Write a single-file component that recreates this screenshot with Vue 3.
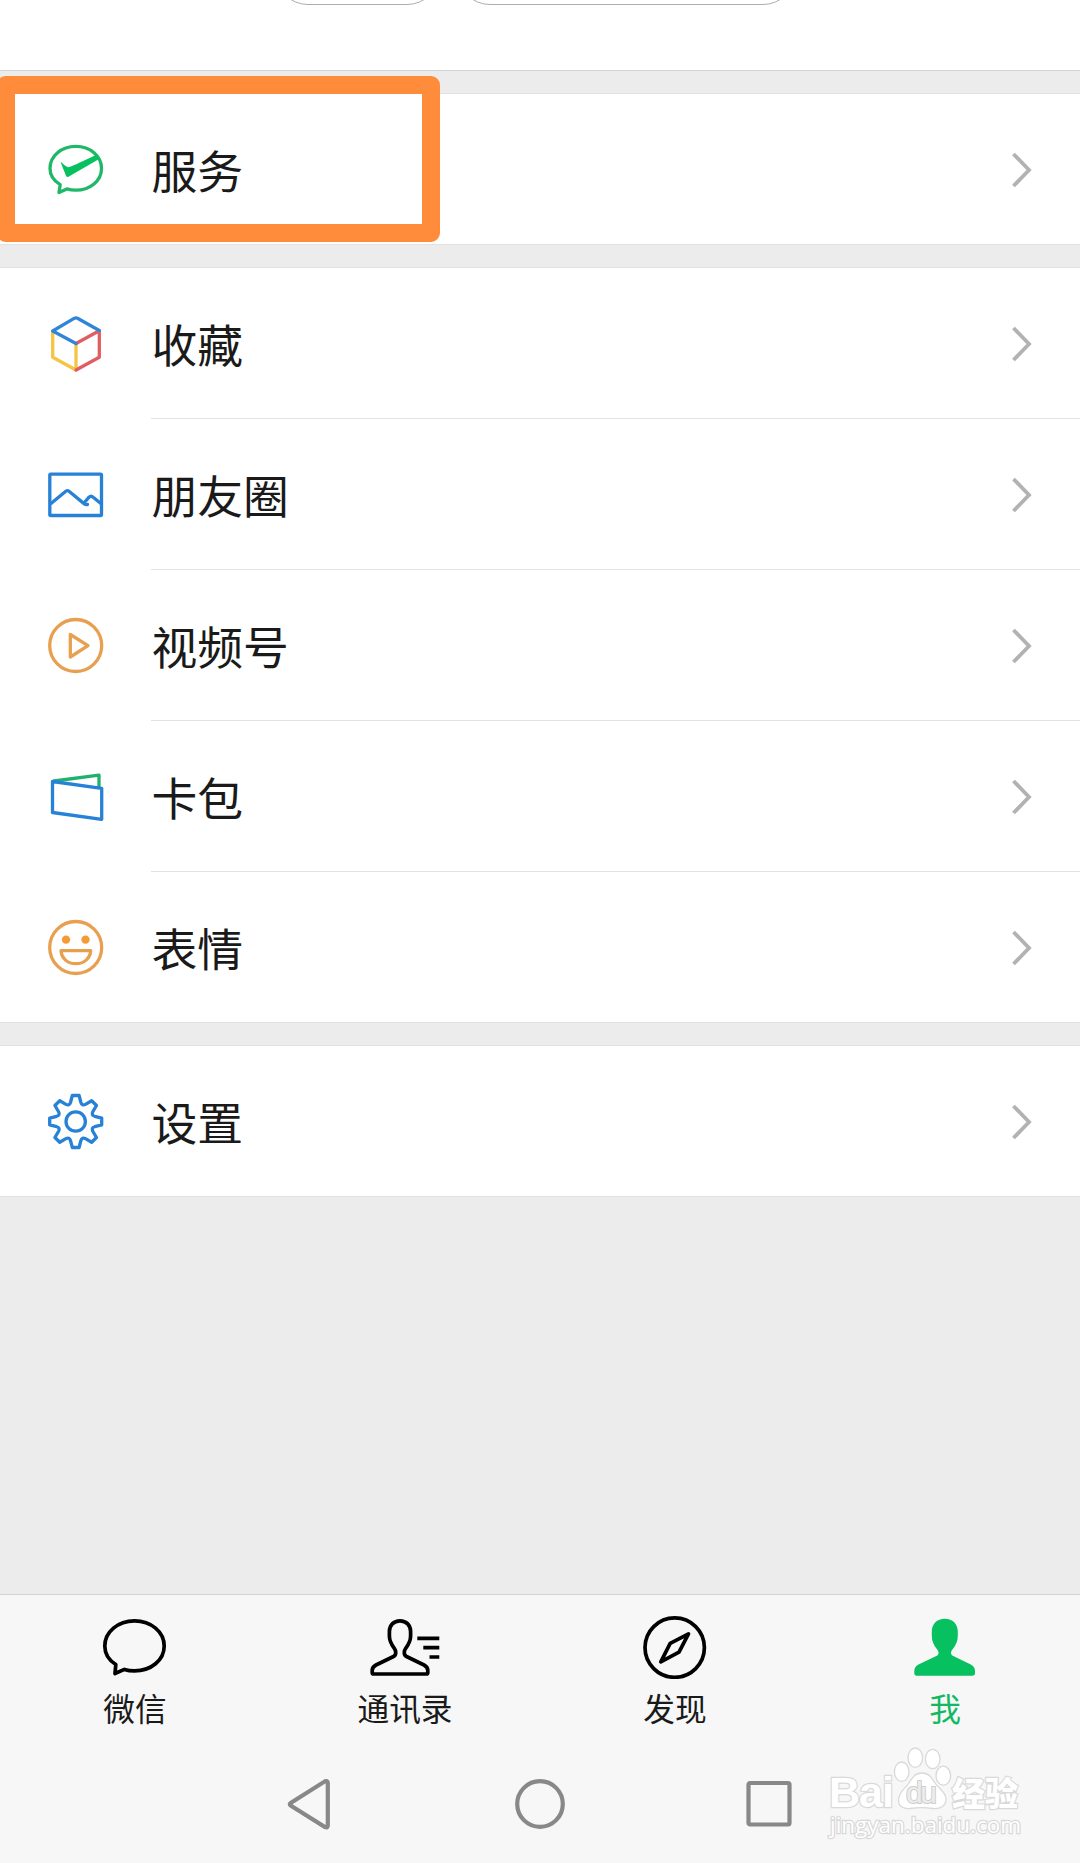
<template>
  <div class="page">
    <!-- 個人資訊底部 -->
    <header class="profile">
      <span class="pill pill-status"></span>
      <span class="pill pill-friends"></span>
    </header>

    <!-- 選單 -->
    <main class="menu">
      <ul v-for="(group, index) in menuGroups" :key="index" class="menu-group">
        <li v-for="item in group" :key="item.key" class="menu-item">
          <svg class="menu-icon" viewBox="0 0 66 66">
            <g v-if="item.key === 'service'" stroke="#1fb768">
              <path d="M17.2 48.6C10.500 44.500 7 38.800 7 32.400C7 20 18.500 10.400 32.800 10.400S58.500 20 58.500 32.400S47 54.200 32.800 54.200C29.600 54.200 26.700 53.800 23.800 52.900L16 56.600Z" />
              <path class="solid" fill="#07c160" d="M17.700 26.500L18.500 26.300Q22.500 31 25.500 31.300Q27 31.300 53.500 18.800L57 22.400L25 40.900Q23.800 41.300 23 39.800Z" />
            </g>
            <g v-else-if="item.key === 'favorite'">
              <path stroke="#f5c443" d="M9.700 21.200V47.200L33 60V33.500" />
              <path stroke="#e05d62" d="M56.300 21V47.200L33 60M33 33.500L56.300 20.800" />
              <path stroke="#2f86d8" d="M33 33.500L9.700 21L31.500 8.200Q33 7.400 34.500 8.200L56.300 20.500" />
            </g>
            <g v-else-if="item.key === 'moments'" stroke="#2782d7">
              <rect x="6.800" y="13.200" width="51.700" height="41.300" rx="1" />
              <path d="M8 42.500L22.800 30.300Q24.400 29 26 30.300L41 42.600Q42.500 43.800 44.500 43.500M41 42L46 36.200Q48 34.200 50.200 36.200L57.500 42.300" />
            </g>
            <g v-else-if="item.key === 'channels'" stroke="#e8a050">
              <circle cx="32.700" cy="33.500" r="26" />
              <path d="M27.300 22.500V45L45 33.700Z" />
            </g>
            <g v-else-if="item.key === 'cards'">
              <path stroke="#20b26c" d="M11 18L56 12.200V24" />
              <path stroke="#2782d7" d="M9.500 18.500L58.700 25.300V56.300L9.500 49.500Z" />
            </g>
            <g v-else-if="item.key === 'sticker'" stroke="#e8a050">
              <circle cx="32.700" cy="33.500" r="26" />
              <circle class="solid" fill="#f59a35" cx="23" cy="25.600" r="4.200" />
              <circle class="solid" fill="#f59a35" cx="42.500" cy="25.600" r="4.200" />
              <path d="M18 36.700H47.700C47.200 44.500 41 49.700 32.800 49.700S18.500 44.500 18 36.700Z" />
            </g>
            <g v-else stroke="#2782d7">
              <path :d="gearPath" />
              <circle cx="32.700" cy="33.500" r="9.700" />
            </g>
          </svg>
          <div class="menu-body">
            <span class="menu-label">{{ item.label }}</span>
            <svg class="arrow" viewBox="0 0 24 40">
              <path d="M4.500 4L20 20L4.500 36" />
            </svg>
          </div>
          <span v-if="item.marked" class="mark"></span>
        </li>
      </ul>
    </main>

    <!-- 底部導覽列 -->
    <nav class="tabbar">
      <a
        v-for="tab in tabs"
        :key="tab.key"
        class="tab"
        :class="{ active: tab.key === currentTab }"
        @click="currentTab = tab.key"
      >
        <svg class="tab-icon" viewBox="0 0 80 66">
          <path v-if="tab.key === 'chats'" d="M20.800 51.500C13.500 47 9.800 40.500 9.800 33C9.800 18.800 23 7.800 39.500 7.800S69.200 18.800 69.200 33S56 57.900 39.500 57.900C35.900 57.900 32.500 57.400 29.400 56.400L20 60.500Z" />
          <g v-else-if="tab.key === 'contacts'">
            <path d="M35 7.800C28.500 7.800 24.400 12.500 24.400 18.500V23C24.400 28 26.500 31.500 29 34.800C31.500 38 31.300 42 28.500 43.500L11 52Q7.200 54 7.200 57.500V59.500Q7.200 61 8.700 61H61.300Q62.800 61 62.800 59.500V57.500Q62.800 54 59 52L41.500 43.500C38.700 42 38.500 38 41 34.800C43.500 31.500 45.600 28 45.600 23V18.500C45.600 12.500 41.500 7.800 35 7.800Z" />
            <path d="M52.300 25.300H74.300M58.300 34.700H74.300M64.500 44H74.300" />
          </g>
          <g v-else-if="tab.key === 'discover'">
            <circle cx="39.700" cy="34.600" r="29.700" />
            <path d="M53.500 20.800L35.200 30.400L25.800 48.800L44 39.200Z" />
          </g>
          <path v-else class="filled" d="M39.800 5.700C32 5.700 26.800 11 26.800 18.500V23C26.800 28 28.800 32.500 32 36.300C34 38.700 34.300 41.500 31.800 42.800L13.500 51.500Q9.300 53.800 9.300 58V60Q9.300 62.700 12 62.700H67.300Q70 62.700 70 60V58Q70 53.800 65.800 51.500L47.800 42.800C45.300 41.500 45.600 38.700 47.600 36.300C50.800 32.500 52.800 28 52.800 23V18.500C52.800 11 47.600 5.700 39.800 5.700Z" />
        </svg>
        <span class="tab-label">{{ tab.label }}</span>
      </a>
    </nav>

    <!-- 系統按鍵 -->
    <footer class="system-nav">
      <svg viewBox="0 0 60 60">
        <path d="M47.800 8.500Q47.500 6.300 45 7.300L11 28.700Q8.500 30.200 11 31.800L45 53Q47.500 54 47.800 51.800Z" />
      </svg>
      <svg viewBox="0 0 60 60"><circle cx="30" cy="30" r="22.800" /></svg>
      <svg viewBox="0 0 60 60"><rect x="8.500" y="9" width="41" height="41.500" rx="1.500" /></svg>
    </footer>

    <!-- 浮水印 -->
    <svg class="watermark" viewBox="0 0 210 100">
      <text class="brand" x="9" y="57" textLength="65">Bai</text>
      <ellipse cx="81.700" cy="21.700" rx="7.300" ry="9.700" />
      <ellipse cx="95.300" cy="7.700" rx="7.300" ry="9.700" />
      <ellipse cx="112.700" cy="9" rx="7.300" ry="9.700" />
      <ellipse cx="123.300" cy="25.700" rx="7.300" ry="9.500" />
      <path d="M102 23C95 23 92 28 89 33C85 39 78.500 42 78.500 50C78.500 57 84 59 90 58.500C97 57.500 106 57.500 113 58.500C120 59.500 126 56 126 49C126 42 119 39 115 33C112 28 109 23 102 23Z" />
      <text class="pad-text" x="86" y="53" textLength="31">du</text>
      <text class="brand-cn" x="132" y="56" textLength="66">经验</text>
      <text class="site" x="10" y="82.500" textLength="191" lengthAdjust="spacingAndGlyphs">jingyan.baidu.com</text>
    </svg>
  </div>
</template>

<script setup>
import { ref } from 'vue'

// 選單項目
const menuGroups = [
  [{ key: 'service', label: '服务', marked: true }],
  [
    { key: 'favorite', label: '收藏' },
    { key: 'moments', label: '朋友圈' },
    { key: 'channels', label: '视频号' },
    { key: 'cards', label: '卡包' },
    { key: 'sticker', label: '表情' }
  ],
  [{ key: 'settings', label: '设置' }]
]

const tabs = [
  { key: 'chats', label: '微信' },
  { key: 'contacts', label: '通讯录' },
  { key: 'discover', label: '发现' },
  { key: 'me', label: '我' }
]
const currentTab = ref('me')

// 齒輪外框,共八齒
const createGearPath = () => {
  const rotate = (x, y, deg) => {
    const rad = (deg * Math.PI) / 180
    const px = 32.7 + x * Math.cos(rad) - y * Math.sin(rad)
    const py = 33.5 + x * Math.sin(rad) + y * Math.cos(rad)
    return `${px.toFixed(2)} ${py.toFixed(2)}`
  }
  let d = ''
  for (let i = 0; i < 8; i++) {
    const deg = i * 45
    d += `${i ? 'L' : 'M'}${rotate(-5.2, -19, deg)}L${rotate(-3.4, -26, deg)}`
    d += `L${rotate(3.4, -26, deg)}L${rotate(5.2, -19, deg)}`
    d += `Q${rotate(0, -16.6, deg + 22.5)} ${rotate(-5.2, -19, deg + 45)}`
  }
  return d + 'Z'
}
const gearPath = createGearPath()
</script>

<style>
body {
  margin: 0;
}
</style>

<style scoped>
.page {
  position: relative;
  display: flex;
  flex-direction: column;
  width: 1080px;
  height: 1863px;
  overflow: hidden;
  background-color: #ececec;
  font-family: "Noto Sans CJK SC", sans-serif;
  color: #1a1a1a;
}

.profile {
  box-sizing: border-box;
  flex: none;
  display: flex;
  align-items: flex-start;
  gap: 17px;
  height: 71px;
  padding-left: 275px;
  background-color: #fff;
  border-bottom: 1px solid #d4d4d4;
}

.pill {
  box-sizing: border-box;
  height: 66px;
  margin-top: -61px;
  border: 1px solid #adadad;
  border-radius: 33px;
}

.pill-status {
  width: 165px;
}

.pill-friends {
  width: 339px;
}

.menu {
  flex: 1;
}

.menu-group {
  list-style: none;
  margin: 22px 0 0;
  padding: 0;
  background-color: #fff;
  border-top: 1px solid #e2e2e2;
  border-bottom: 1px solid #e2e2e2;
}

.menu-item {
  position: relative;
  display: flex;
  align-items: flex-start;
  height: 151px;
}

.menu-item:last-child {
  height: 150px;
}

.menu-icon {
  flex: none;
  width: 66px;
  height: 66px;
  margin: 42px 42px 0 43px;
  fill: none;
  stroke-width: 3.3;
  stroke-linejoin: round;
  stroke-linecap: round;
}

.menu-icon .solid {
  stroke: none;
}

.menu-body {
  box-sizing: border-box;
  flex: 1;
  display: flex;
  align-items: center;
  justify-content: space-between;
  height: 100%;
  padding: 1px 47px 0 0;
  border-bottom: 1px solid #e2e2e2;
}

.menu-item:last-child .menu-body {
  border-bottom: none;
}

.menu-label {
  font-size: 45.8px;
  line-height: 66px;
  padding: 0 0 2px 0.5px;
}

.arrow {
  width: 24px;
  height: 40px;
  fill: none;
  stroke: #b2b2b2;
  stroke-width: 3.8;
}

/* 框選標記 */
.mark {
  position: absolute;
  left: -3px;
  top: -18px;
  box-sizing: border-box;
  width: 443px;
  height: 166px;
  border: 18px solid #ff8c3a;
  border-radius: 9px;
}

.tabbar {
  box-sizing: border-box;
  flex: none;
  display: flex;
  height: 151px;
  background-color: #f7f7f7;
  border-top: 1px solid #d2d2d2;
}

.tab {
  flex: 1;
  display: flex;
  flex-direction: column;
  align-items: center;
  padding-top: 18px;
}

.tab-icon {
  width: 80px;
  height: 66px;
  fill: none;
  stroke: #000;
  stroke-width: 3.7;
  stroke-linejoin: round;
}

.tab-icon .filled {
  fill: #07c160;
  stroke: none;
}

.tab-label {
  font-size: 31.7px;
  line-height: 46px;
  margin-top: 5px;
}

.tab.active {
  color: #12b962;
}

.system-nav {
  flex: none;
  display: grid;
  grid-template-columns: repeat(3, 230px);
  justify-content: center;
  justify-items: center;
  align-items: center;
  height: 118px;
  background-color: #f7f7f7;
}

.system-nav svg {
  width: 60px;
  height: 60px;
  fill: none;
  stroke: #888;
  stroke-width: 4.2;
}

.watermark {
  position: absolute;
  left: 820px;
  top: 1750px;
  width: 210px;
  height: 100px;
  overflow: visible;
  fill: #fff;
  stroke: #d9d9d9;
  stroke-width: 1.3;
}

.watermark text {
  paint-order: stroke;
  stroke-width: 2.4;
}

.brand {
  font: bold 43px "Liberation Sans", sans-serif;
}

.watermark .pad-text {
  font: 30px "Liberation Sans", sans-serif;
  fill: #ececec;
  stroke: #cfcfcf;
  stroke-width: 2;
}

.brand-cn {
  font: 900 33px "Noto Sans CJK SC", sans-serif;
}

.site {
  font: 21px "Open Sans", sans-serif;
}
</style>
